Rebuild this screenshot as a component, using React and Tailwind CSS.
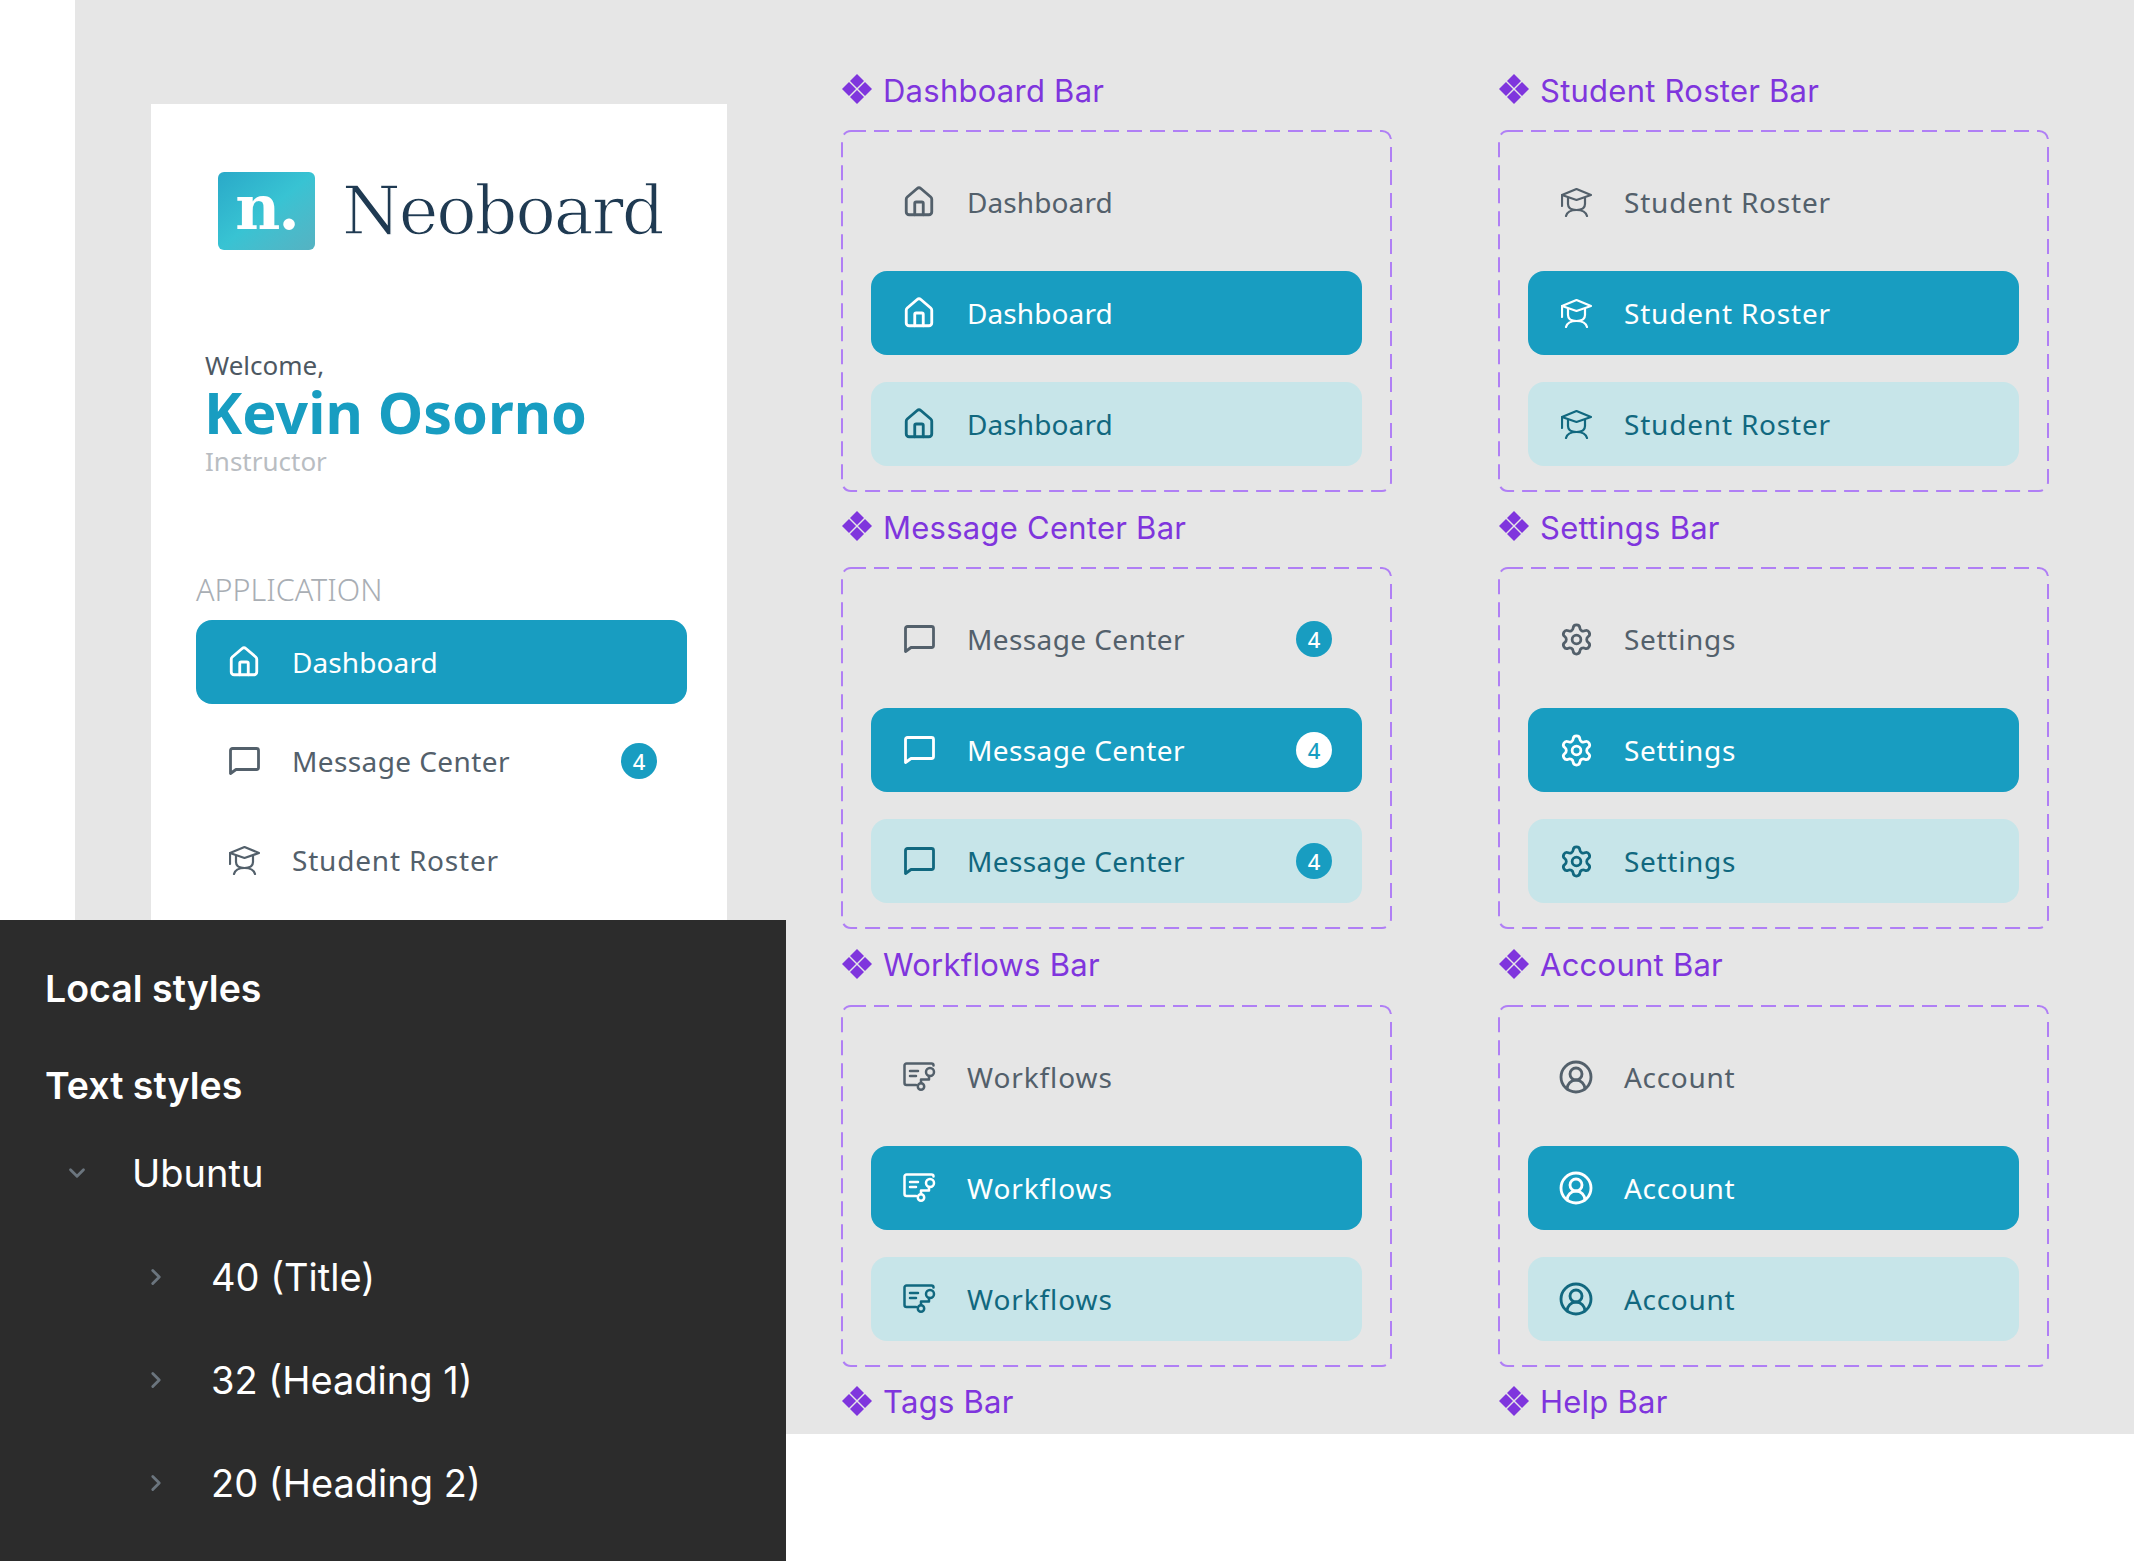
import React from "react";
import { House, Settings, CircleUserRound, ChevronDown, ChevronRight } from "lucide-react";

/* ================= ICONS ================= */
const HomeIcon = () => <House size={34} strokeWidth={2} />;
const GearIcon = () => <Settings size={35} strokeWidth={1.9} />;
const AccountIcon = () => <CircleUserRound size={36} strokeWidth={1.9} />;

const ChatIcon = () => (
  <svg width="31" height="28" viewBox="0 0 31 28" fill="none" stroke="currentColor" strokeWidth="2.8" strokeLinejoin="round">
    <path d="M3.5 1.5h24a2 2 0 0 1 2 2v17a2 2 0 0 1-2 2H7l-5.5 4V3.5a2 2 0 0 1 2-2z" />
  </svg>
);

const StudentIcon = () => (
  <svg width="31" height="29" viewBox="0 0 31 29" fill="none" stroke="currentColor" strokeWidth="2.2" strokeLinecap="round" strokeLinejoin="round">
    <path d="M1 7l14.5-6L30 7l-14.5 5z" />
    <path d="M1 7v11" />
    <path d="M7 10v6c0 4 3.5 6 8.5 6s8.500-2 8.500-6v-6" />
    <path d="M5 28c1-4 5-6 10.500-6s9.500 2 10.500 6" />
  </svg>
);

const WorkflowIcon = () => (
  <svg width="33" height="29" viewBox="0 0 33 29" fill="none" stroke="currentColor" strokeWidth="2.500" strokeLinecap="round" strokeLinejoin="round">
    <path d="M13 23H3.500a2 2 0 0 1-2-2V3.500a2 2 0 0 1 2-2h25a2 2 0 0 1 2 2" />
    <path d="M7 9h8M7 14h6" />
    <circle cx="27" cy="10" r="4" />
    <path d="M26 14v3.500h-8V21" />
    <circle cx="18" cy="24.500" r="3.200" />
  </svg>
);

const ComponentIcon = () => (
  <svg width="30" height="30" viewBox="0 0 30 30" className="fill-[#7f35dd] shrink-0">
    <polygon points="15,0 22,7 15,14 8,7" />
    <polygon points="7,8 14,15 7,22 0,15" />
    <polygon points="23,8 30,15 23,22 16,15" />
    <polygon points="15,16 22,23 15,30 8,23" />
  </svg>
);

/* ================= NAV ROW ================= */
const VARIANT = {
  plain: "text-[#53606b]",
  active: "bg-[#189dc1] text-white",
  soft: "bg-[#c7e5e9] text-[#11687f]",
};

function NavRow({ item, variant }) {
  const Icon = item.icon;
  return (
    <div className={`flex h-[84px] w-[491px] items-center rounded-2xl pl-4 pr-[30px] ${VARIANT[variant]}`}>
      <div className="flex w-16 shrink-0 items-center justify-center">
        <Icon />
      </div>
      <span className={`ml-4 text-[28px] leading-none ${item.tracking}`}>{item.label}</span>
      {item.badge && (
        <span
          className={`ml-auto flex h-9 w-9 items-center justify-center rounded-full text-[22px] font-medium leading-none ${
            variant === "active" ? "bg-white text-[#189dc1]" : "bg-[#189dc1] text-white"
          }`}
        >
          {item.badge}
        </span>
      )}
    </div>
  );
}

function SetLabel({ title }) {
  return (
    <div className="ml-px flex h-10 items-center gap-[11px] font-['Inter',sans-serif] text-[31px] leading-none text-[#7f35dd]">
      <ComponentIcon />
      <span className="translate-y-px tracking-[0.25px]">{title}</span>
    </div>
  );
}

function VariantSet({ title, item }) {
  return (
    <div className="mb-[14.3px]">
      <SetLabel title={title} />
      <div className="relative mt-[21px] flex h-[362px] w-[551px] flex-col gap-[27px] px-[30px] pt-[30px]">
        <svg width="551" height="362" className="absolute left-0 top-0" fill="none">
          <rect x="1" y="1" width="549" height="360" rx="9" stroke="#b07ff5" strokeWidth="2" strokeDasharray="15 8" />
        </svg>
        <NavRow item={item} variant="plain" />
        <NavRow item={item} variant="active" />
        <NavRow item={item} variant="soft" />
      </div>
    </div>
  );
}

const dashboard = { label: "Dashboard", icon: HomeIcon, tracking: "tracking-[0.1px]" };
const messages = { label: "Message Center", icon: ChatIcon, badge: "4", tracking: "tracking-[0.4px]" };
const roster = { label: "Student Roster", icon: StudentIcon, tracking: "tracking-[0.8px]" };
const settings = { label: "Settings", icon: GearIcon, tracking: "tracking-[0.7px]" };
const workflows = { label: "Workflows", icon: WorkflowIcon, tracking: "tracking-[0.9px]" };
const account = { label: "Account", icon: AccountIcon, tracking: "tracking-[0.7px]" };

/* ================= STYLES PANEL ================= */
function StyleRow({ label }) {
  return (
    <div className="flex h-[60px] items-center text-[38px] leading-none text-white">
      <div className="flex w-[211px] justify-end pr-[42px] text-[#6b757e]">
        <ChevronRight size={26} strokeWidth={2.6} />
      </div>
      <span>{label}</span>
    </div>
  );
}

export default function App() {
  return (
    <div className="relative h-[1562px] w-[2134px] overflow-hidden bg-white font-['Noto_Sans',sans-serif]">
      <div className="ml-[75px] flex h-[1434px] overflow-hidden bg-[#e6e6e6] pl-[76px] pt-[69px]">
        {/* SIDEBAR CARD */}
        <div className="mt-[35px] h-[900px] w-[576px] shrink-0 bg-white">
          <div className="ml-[67px] mt-[68px] flex items-center">
            <div className="flex h-[78px] w-[97px] items-center justify-center rounded-[6px] bg-gradient-to-br from-[#2aa9c8] via-[#38c3d3] to-[#55b2c2] font-['DejaVu_Serif',serif] text-[62px] font-bold leading-none tracking-[-2px] text-white">
              <span className="-mt-[6px]">n.</span>
            </div>
            <span className="ml-[27px] font-['DejaVu_Serif',serif] text-[67px] leading-none tracking-[-2px] text-[#1f3a52] [-webkit-text-stroke:1.3px_#ffffff]">
              Neoboard
            </span>
          </div>

          <div className="ml-[54px] mt-[99px]">
            <div className="h-[32px] text-[26px] leading-[32px] text-[#4d5862]">Welcome,</div>
            <div className="-ml-px h-[62px] text-[57.500px] font-bold leading-[62px] text-[#189dc1]">Kevin Osorno</div>
            <div className="h-[36px] text-[26px] leading-[36px] text-[#b9bdc2]">Instructor</div>
          </div>

          <div className="ml-[45px] mt-[90px]">
            <div className="h-[40px] text-[30.500px] font-light leading-[40px] text-[#a9aeb4]">APPLICATION</div>
            <div className="mt-[11px] flex flex-col gap-[15px]">
              <NavRow item={dashboard} variant="active" />
              <NavRow item={messages} variant="plain" />
              <NavRow item={roster} variant="plain" />
            </div>
          </div>
        </div>

        {/* COMPONENT SETS */}
        <div className="ml-[114px] w-[551px] shrink-0">
          <VariantSet title="Dashboard Bar" item={dashboard} />
          <VariantSet title="Message Center Bar" item={messages} />
          <VariantSet title="Workflows Bar" item={workflows} />
          <SetLabel title="Tags Bar" />
        </div>
        <div className="ml-[106px] w-[551px] shrink-0">
          <VariantSet title="Student Roster Bar" item={roster} />
          <VariantSet title="Settings Bar" item={settings} />
          <VariantSet title="Account Bar" item={account} />
          <SetLabel title="Help Bar" />
        </div>
      </div>

      {/* LOCAL STYLES PANEL */}
      <div className="absolute left-0 top-[920px] h-[641px] w-[786px] bg-[#2c2c2c] pl-[45px] pt-[39px] font-['Inter',sans-serif]">
        <div className="flex h-[60px] items-center text-[37.500px] font-semibold leading-none text-white">Local styles</div>
        <div className="mt-[37px] flex h-[60px] items-center text-[37.500px] font-semibold leading-none text-white">Text styles</div>
        <div className="mt-[27px] flex h-[60px] items-center text-[38px] leading-none text-white">
          <div className="ml-[19px] w-[68px] text-[#6b757e]">
            <ChevronDown size={26} strokeWidth={2.6} />
          </div>
          <span>Ubuntu</span>
        </div>
        <div className="-ml-[45px] mt-[44px] flex flex-col gap-[43px]">
          <StyleRow label="40 (Title)" />
          <StyleRow label="32 (Heading 1)" />
          <StyleRow label="20 (Heading 2)" />
        </div>
      </div>
    </div>
  );
}
